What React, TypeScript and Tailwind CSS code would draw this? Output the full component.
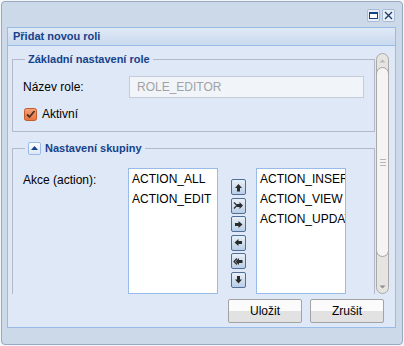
import React from 'react';

const font = { fontFamily: '"Liberation Sans", Arial, sans-serif' };

function ArrowIcon({ kind }: { kind: string }) {
  // small dark arrows used by the item selector buttons
  const paths: Record<string, React.ReactNode> = {
    up: <path d="M6.5 3 L10 7 H8 V10.5 H5 V7 H3 Z" fill="#2b2b2b" />,
    down: <path d="M6.5 10.5 L10 6.5 H8 V3 H5 V6.5 H3 Z" fill="#2b2b2b" />,
    right: <path d="M10.5 6.5 L6.5 3 V5 H3 V8 H6.5 V10 Z" fill="#2b2b2b" />,
    left: <path d="M2.5 6.5 L6.5 3 V5 H10 V8 H6.5 V10 Z" fill="#2b2b2b" />,
    rightAll: (
      <>
        <path d="M2 3.5 L5 6.5 L2 9.5" fill="none" stroke="#2b2b2b" strokeWidth="1.2" />
        <path d="M11 6.5 L7.5 3 V5 H5 V8 H7.5 V10 Z" fill="#2b2b2b" />
      </>
    ),
    leftAll: (
      <>
        <path d="M5 3.5 L2 6.5 L5 9.5" fill="none" stroke="#2b2b2b" strokeWidth="1.2" />
        <path d="M3.5 6.5 L7 3 V5 H10.5 V8 H7 V10 Z" fill="#2b2b2b" />
      </>
    ),
  };
  return (
    <button className="w-[15px] h-[16px] flex items-center justify-center border border-[#4f6f98] rounded-[2px] bg-gradient-to-b from-[#e9f0f8] to-[#bacee6]">
      <svg width="13" height="13" viewBox="0 0 13 13">
        {paths[kind]}
      </svg>
    </button>
  );
}

function ListBox({ items }: { items: string[] }) {
  return (
    <div className="w-[90px] h-[126px] bg-white border border-[#99bbe8] overflow-hidden">
      {items.map((it) => (
        <div key={it} className="h-[20px] leading-[20px] px-[3px] whitespace-nowrap text-[12px] text-black">
          {it}
        </div>
      ))}
    </div>
  );
}

function Scrollbar() {
  return (
    <div className="ml-[1px] w-[13px] h-[241px] mt-[7px] rounded-full border border-[#a9a9a9] bg-[#e6e4e1] flex flex-col items-stretch overflow-hidden">
      <div className="h-[13px] flex items-center justify-center">
        <svg width="7" height="4" viewBox="0 0 7 4">
          <path d="M0.5 3.5 L3.5 0.5 L6.5 3.5 Z" fill="#b9b9b9" />
        </svg>
      </div>
      <div className="h-[190px] rounded-full border border-[#a3a3a3] bg-[#f6f4f2] -mx-[1px] flex flex-col items-center justify-center gap-[2px]">
        <div className="w-[6px] h-[1px] bg-[#b5b5b5]" />
        <div className="w-[6px] h-[1px] bg-[#b5b5b5]" />
        <div className="w-[6px] h-[1px] bg-[#b5b5b5]" />
      </div>
      <div className="flex-1" />
      <div className="h-[13px] flex items-center justify-center">
        <svg width="7" height="4" viewBox="0 0 7 4">
          <path d="M0.5 0.5 L3.5 3.5 L6.5 0.5 Z" fill="#8d8d8d" />
        </svg>
      </div>
    </div>
  );
}

export default function App() {
  return (
    <div className="w-[404px] h-[346px] bg-[#f3f5f8] p-[1px]" style={font}>
      <div className="h-full rounded-[4px] border border-[#98a9c1] bg-[#ccd9e9] flex flex-col pl-[5px] pr-[6px] pb-[16px]">
        {/* Window title bar */}
        <div className="h-[25px] flex items-center justify-end gap-[2px] pt-[2px] pr-[1px]">
          <button className="w-[13px] h-[13px] rounded-[2px] border border-[#a8bcd6] bg-[#e9f0f8] flex items-center justify-center">
            <svg width="11" height="11" viewBox="0 0 11 11">
              <rect x="1.5" y="2.5" width="8" height="6" fill="white" stroke="#15428b" />
              <rect x="1" y="2" width="9" height="2" fill="#15428b" />
            </svg>
          </button>
          <button className="w-[13px] h-[13px] rounded-[2px] border border-[#a8bcd6] bg-[#e9f0f8] flex items-center justify-center">
            <svg width="11" height="11" viewBox="0 0 11 11">
              <path d="M2 2 L9 9 M9 2 L2 9" stroke="#1e3f73" strokeWidth="1.4" />
            </svg>
          </button>
        </div>

        {/* Panel */}
        <div className="flex-1 border border-[#99bbe8] bg-[#dfe8f6] flex flex-col">
          <div className="h-[18px] shrink-0 border-b border-[#99bbe8] bg-gradient-to-b from-[#e0eaf7] to-[#c9d9ee] px-[5px] flex items-center">
            <span className="text-[11px] font-bold text-[#15428b]">Přidat novou roli</span>
          </div>

          <div className="flex-1 flex flex-col">
            <div className="h-[248px] flex">
              <div className="w-[367px] pl-[4px] pt-[6px] overflow-hidden">
                <fieldset className="border border-[#b5b8c8] px-[10px] pb-[10px]">
                  <legend className="ml-[2px] px-[3px] text-[11px] leading-[14px] font-bold text-[#15428b]">
                    Základní nastavení role
                  </legend>
                  <div className="pt-[10px] flex items-center h-[32px]">
                    <label className="w-[106px] text-[12px] text-black">Název role:</label>
                    <div className="flex-1 h-[22px] border border-[#c4ccd8] bg-[#f1f5fa] px-[7px] flex items-center text-[12px] text-[#a2a2a2]">
                      ROLE_EDITOR
                    </div>
                  </div>
                  <div className="mt-[9px] h-[14px] flex items-center gap-[5px] pl-[1px]">
                    <svg width="13" height="13" viewBox="0 0 13 13">
                      <defs>
                        <linearGradient id="cb" x1="0" y1="0" x2="0" y2="1">
                          <stop offset="0" stopColor="#f7a27a" />
                          <stop offset="1" stopColor="#e9733f" />
                        </linearGradient>
                      </defs>
                      <rect x="0.5" y="0.5" width="12" height="12" rx="2" fill="url(#cb)" stroke="#c45a2c" />
                      <path d="M3 6.5 L5.5 9 L10.5 3" fill="none" stroke="#4a3024" strokeWidth="1.8" />
                    </svg>
                    <span className="text-[12px] text-black">Aktivní</span>
                  </div>
                </fieldset>

                <fieldset className="mt-[9px] border border-[#b5b8c8] px-[10px] pb-[20px]">
                  <legend className="ml-[2px] px-[3px] text-[11px] leading-[14px] font-bold text-[#15428b] flex items-center gap-[4px]">
                    <span className="w-[13px] h-[13px] rounded-[2px] border border-[#99bbe8] bg-gradient-to-b from-[#ffffff] to-[#dbe6f4] flex items-center justify-center">
                      <svg width="7" height="4" viewBox="0 0 7 4">
                        <path d="M0 4 L3.5 0 L7 4 Z" fill="#15428b" />
                      </svg>
                    </span>
                    Nastavení skupiny
                  </legend>
                  <div className="pt-[13px] flex items-start">
                    <label className="w-[105px] pt-[3px] text-[12px] text-black">Akce (action):</label>
                    <ListBox items={['ACTION_ALL', 'ACTION_EDIT']} />
                    <div className="ml-[13px] mt-[11px] flex flex-col gap-[2.6px]">
                      <ArrowIcon kind="up" />
                      <ArrowIcon kind="rightAll" />
                      <ArrowIcon kind="right" />
                      <ArrowIcon kind="left" />
                      <ArrowIcon kind="leftAll" />
                      <ArrowIcon kind="down" />
                    </div>
                    <div className="ml-[10px]">
                      <ListBox items={['ACTION_INSERT', 'ACTION_VIEW', 'ACTION_UPDATE']} />
                    </div>
                  </div>
                </fieldset>
              </div>
              <Scrollbar />
            </div>

            {/* Button bar */}
            <div className="flex justify-end gap-[8px] pt-[5px] pr-[11px]">
              <button className="w-[74px] h-[24px] rounded-[2px] border border-[#a3a3a3] bg-gradient-to-b from-[#fbfbfb] from-50% to-[#e2e2e2] to-50% text-[12px] text-black">
                Uložit
              </button>
              <button className="w-[74px] h-[24px] rounded-[2px] border border-[#a3a3a3] bg-gradient-to-b from-[#fbfbfb] from-50% to-[#e2e2e2] to-50% text-[12px] text-black">
                Zrušit
              </button>
            </div>
          </div>
        </div>
      </div>
    </div>
  );
}
